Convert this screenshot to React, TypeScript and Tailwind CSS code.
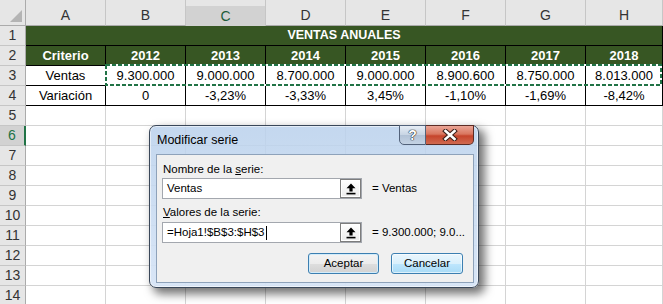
import React from 'react';

const W = ['w-[80px]', 'w-[80px]', 'w-[80px]', 'w-[80px]', 'w-[80px]', 'w-[80px]', 'w-[80px]', 'w-[77px]'];
const LETTERS = ['A', 'B', 'C', 'D', 'E', 'F', 'G', 'H'];
const ROW2 = ['Criterio', '2012', '2013', '2014', '2015', '2016', '2017', '2018'];
const ROW3 = ['Ventas', '9.300.000', '9.000.000', '8.700.000', '9.000.000', '8.900.600', '8.750.000', '8.013.000'];
const ROW4 = ['Variación', '0', '-3,23%', '-3,33%', '3,45%', '-1,10%', '-1,69%', '-8,42%'];

function RowHeader({ n }: { n: number }) {
  const sel = n === 6;
  return (
    <div
      className={
        sel
          ? 'w-[26px] h-full flex items-center justify-center bg-[#d2d2d2] border-b border-b-[#c6c6c6] border-r-2 border-r-[#217346] text-[#217346] text-[14px]'
          : 'w-[26px] h-full flex items-center justify-center bg-[#e6e6e6] border-b border-b-[#c6c6c6] border-r border-r-[#ababab] text-[#333] text-[14px]'
      }
    >
      {n}
    </div>
  );
}

function UpButton() {
  return (
    <div className="ml-auto w-[21px] h-full border border-[#7d7d7d] bg-[linear-gradient(to_bottom,#ffffff,#ececec)] shadow-[inset_0_0_0_1px_#ffffff] flex items-center justify-center">
      <svg width="10" height="12" viewBox="0 0 10 12">
        <polygon points="5,0.5 9.5,5.2 6.6,5.2 6.6,8.4 3.4,8.4 3.4,5.2 0.5,5.2" fill="#000" />
        <rect x="0.5" y="9.8" width="9" height="1.6" fill="#000" />
      </svg>
    </div>
  );
}

export default function App() {
  return (
    <div className="relative w-[663px] h-[304px] overflow-hidden bg-white font-['Liberation_Sans',Arial,sans-serif]">
      {/* Column header row */}
      <div className="flex h-[26px]">
        <div className="w-[26px] h-full bg-[#e6e6e6] border-r border-b border-[#ababab] flex items-end justify-end pr-[3px] pb-[3px]">
          <svg width="12" height="12" viewBox="0 0 12 12">
            <polygon points="12,0 12,12 0,12" fill="#b4b4b4" />
          </svg>
        </div>
        {LETTERS.map((l, i) =>
          l === 'C' ? (
            <div key={l} className={`${W[i]} h-full bg-[#e6e6e6] pt-[6px] flex flex-col border-r border-r-[#c6c6c6]`}>
              <div className="flex-1 bg-[#d2d2d2] border-b-2 border-[#217346] flex items-center justify-center text-[14px] text-[#1d5c3a]">
                {l}
              </div>
            </div>
          ) : (
            <div
              key={l}
              className={`${W[i]} h-full bg-[#e6e6e6] pt-[6px] flex items-center justify-center border-r border-r-[#c6c6c6] border-b border-b-[#ababab] text-[14px] text-[#333]`}
            >
              {l}
            </div>
          )
        )}
      </div>

      {/* Row 1 */}
      <div className="flex h-[20px]">
        <RowHeader n={1} />
        <div className="w-[637px] h-full bg-[#375623] border-b border-r border-black flex items-center justify-center text-white font-bold text-[12.5px]">
          VENTAS ANUALES
        </div>
      </div>

      {/* Row 2 */}
      <div className="flex h-[20px]">
        <RowHeader n={2} />
        {ROW2.map((t, i) => (
          <div
            key={i}
            className={`${W[i]} h-full bg-[#375623] border-r border-b border-black flex items-center justify-center text-white font-bold text-[13px]`}
          >
            {t}
          </div>
        ))}
      </div>

      {/* Row 3 */}
      <div className="flex h-[20px]">
        <RowHeader n={3} />
        {ROW3.map((t, i) => (
          <div key={i} className={`${W[i]} h-full border-r border-b border-black flex items-center justify-center text-black text-[13px]`}>
            {t}
          </div>
        ))}
      </div>

      {/* Row 4 */}
      <div className="flex h-[20px]">
        <RowHeader n={4} />
        {ROW4.map((t, i) => (
          <div key={i} className={`${W[i]} h-full border-r border-b border-black flex items-center justify-center text-black text-[13px]`}>
            {t}
          </div>
        ))}
      </div>

      {/* Rows 5-14 */}
      {[5, 6, 7, 8, 9, 10, 11, 12, 13, 14].map((n) => (
        <div key={n} className="flex h-[20px]">
          <RowHeader n={n} />
          {LETTERS.map((l, i) => (
            <div key={l} className={`${W[i]} h-full border-r border-b border-[#d4d4d4]`} />
          ))}
        </div>
      ))}

      {/* Marching ants around B3:H3 */}
      <svg className="absolute left-[105px] top-[64px]" width="557" height="22" viewBox="0 0 557 22">
        <rect x="1" y="1" width="555" height="20" fill="none" stroke="#ffffff" strokeWidth="2" />
        <rect x="1" y="1" width="555" height="20" fill="none" stroke="#217346" strokeWidth="2" strokeDasharray="4 2" />
      </svg>

      {/* Dialog */}
      <div className="absolute left-[149px] top-[125px] w-[330px] h-[163px] rounded-[7px] border border-[#3a4759] bg-[linear-gradient(to_bottom,rgba(186,209,236,0.86),rgba(214,228,246,0.93))] shadow-[inset_0_0_0_1px_rgba(255,255,255,0.55),5px_5px_10px_1px_rgba(0,0,0,0.55)] flex flex-col pl-[6px] pr-[4px] pb-[4px] font-['Liberation_Sans',Arial,sans-serif]">
        <div className="h-[28px] flex items-start">
          <div className="h-full flex items-center pl-[1px] text-[12.5px] text-black">Modificar serie</div>
          <div className="ml-auto -mt-px flex">
            <div className="w-[27px] h-[20px] rounded-bl-[5px] border border-[#52627a] bg-[linear-gradient(to_bottom,#e6edf5_0%,#c8d5e4_48%,#b2c2d6_52%,#c4d3e4_100%)] flex items-center justify-center text-white font-bold text-[14px] [text-shadow:0_0_1px_#222,0_0_1px_#222,0_0_1px_#222]">
              ?
            </div>
            <div className="w-[48px] h-[20px] rounded-br-[5px] border border-[#5b2b24] border-l-0 bg-[linear-gradient(to_bottom,#eaa596_0%,#d9765f_45%,#c6442c_55%,#d06a50_100%)] flex items-center justify-center">
              <svg width="16" height="12" viewBox="0 0 16 12">
                <path d="M3.5 2 L12.5 10 M12.5 2 L3.5 10" stroke="#3b1f1a" strokeWidth="4.6" strokeLinecap="square" />
                <path d="M3.5 2 L12.5 10 M12.5 2 L3.5 10" stroke="#ffffff" strokeWidth="2.6" strokeLinecap="square" />
              </svg>
            </div>
          </div>
        </div>

        <div className="flex-1 border border-[#8ea2ba] bg-[#f0f0f0] flex flex-col pl-[5px] pt-[6px] text-[11.5px] text-black">
          <div className="h-[16px] leading-[16px] pl-[1px]">
            Nombre de la <span className="underline">s</span>erie:
          </div>
          <div className="mt-[1px] flex items-center">
            <div className="w-[200px] h-[21px] border border-[#a3a7ae] bg-white flex items-center pl-[4px] pr-0">
              <span>Ventas</span>
              <UpButton />
            </div>
            <span className="ml-[10px]">= Ventas</span>
          </div>

          <div className="mt-[5px] h-[16px] leading-[16px] pl-[1px]">
            <span className="underline">V</span>alores de la serie:
          </div>
          <div className="mt-[2px] flex items-center">
            <div className="w-[200px] h-[21px] border border-[#a3a7ae] bg-white flex items-center pl-[4px]">
              <span>=Hoja1!$B$3:$H$3</span>
              <span className="w-px h-[14px] bg-black ml-[1px]" />
              <UpButton />
            </div>
            <span className="ml-[10px]">= 9.300.000; 9.0...</span>
          </div>

          <div className="mt-[10px] flex pl-[146px] gap-[12px]">
            <div className="w-[71px] h-[21px] rounded-[3px] border border-[#3c7fb1] bg-[linear-gradient(to_bottom,#f4f4f4_0%,#ececec_50%,#dedede_51%,#d2d2d2_100%)] shadow-[inset_0_0_0_1px_#d3ecfa] flex items-center justify-center">
              Aceptar
            </div>
            <div className="w-[72px] h-[21px] rounded-[3px] border border-[#3c7fb1] bg-[linear-gradient(to_bottom,#eaf6fd_0%,#d9f0fc_50%,#bee6fd_51%,#a9dbf6_100%)] shadow-[inset_0_0_0_1px_rgba(255,255,255,0.6)] flex items-center justify-center">
              Cancelar
            </div>
          </div>
        </div>
      </div>
    </div>
  );
}
